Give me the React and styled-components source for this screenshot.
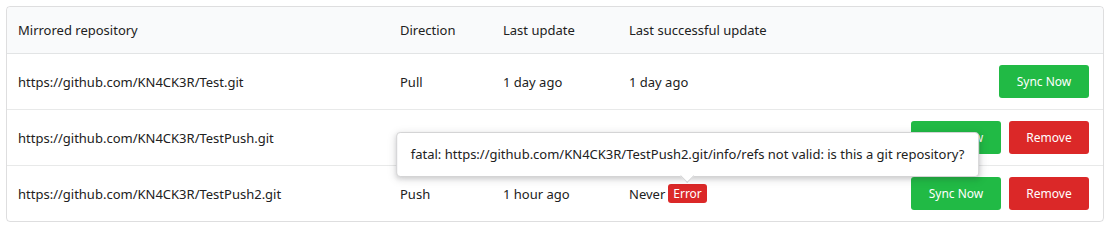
import React from "react";
import styled, { createGlobalStyle } from "styled-components";

const GlobalStyle = createGlobalStyle`
  html, body {
    margin: 0;
    padding: 0;
    background: #fff;
  }
  body {
    font-family: "Noto Sans", "Open Sans", "DejaVu Sans", sans-serif;
    font-size: 13px;
    color: #212121;
  }
`;

const mirrors = [
  {
    repo: "https://github.com/KN4CK3R/Test.git",
    direction: "Pull",
    updated: "1 day ago",
    success: "1 day ago",
    removable: false,
  },
  {
    repo: "https://github.com/KN4CK3R/TestPush.git",
    direction: "Push",
    updated: "1 hour ago",
    success: "1 hour ago",
    removable: true,
  },
  {
    repo: "https://github.com/KN4CK3R/TestPush2.git",
    direction: "Push",
    updated: "1 hour ago",
    success: "Never",
    removable: true,
    error:
      "fatal: https://github.com/KN4CK3R/TestPush2.git/info/refs not valid: is this a git repository?",
  },
];

export default function App() {
  return (
    <Page>
      <GlobalStyle />
      <Table>
        <thead>
          <tr>
            <Th width={360}>Mirrored repository</Th>
            <Th width={81}>Direction</Th>
            <Th width={104}>Last update</Th>
            <Th>Last successful update</Th>
            <Th width={200} />
          </tr>
        </thead>
        <tbody>
          {mirrors.map((m) => (
            <Row key={m.repo}>
              <Td>{m.repo}</Td>
              <Td>{m.direction}</Td>
              <Td>{m.updated}</Td>
              <Td>
                {m.success}
                {m.error && (
                  <Badge>
                    Error
                    <Tooltip>{m.error}</Tooltip>
                  </Badge>
                )}
              </Td>
              <ActionCell>
                <Actions>
                  <Button color="#21ba45" width={90}>
                    Sync Now
                  </Button>
                  {m.removable && (
                    <Button color="#db2828" width={80}>
                      Remove
                    </Button>
                  )}
                </Actions>
              </ActionCell>
            </Row>
          ))}
        </tbody>
      </Table>
    </Page>
  );
}

const Page = styled.div`
  padding: 6px 5px 6px 6px;
`;

const Table = styled.table`
  width: 100%;
  border-collapse: separate;
  border-spacing: 0;
  border: 1px solid rgba(34, 36, 38, 0.15);
  border-radius: 4px;
  table-layout: fixed;
`;

const Th = styled.th`
  width: ${(p) => (p.width ? `${p.width}px` : "auto")};
  height: 46px;
  padding: 0 11px;
  text-align: left;
  font-weight: 400;
  background: #f9fafb;
  border-bottom: 1px solid rgba(34, 36, 38, 0.1);
  &:first-child {
    border-top-left-radius: 4px;
  }
  &:last-child {
    border-top-right-radius: 4px;
  }
`;

const Row = styled.tr`
  & + & td {
    border-top: 1px solid rgba(34, 36, 38, 0.1);
  }
`;

const Td = styled.td`
  height: 55px;
  padding: 0 11px;
  white-space: nowrap;
  vertical-align: middle;
`;

const ActionCell = styled(Td)`
  padding-right: 14px;
`;

const Actions = styled.div`
  display: flex;
  justify-content: flex-end;
  gap: 8px;
`;

const Button = styled.button`
  width: ${(p) => p.width}px;
  height: 33px;
  border: none;
  border-radius: 3px;
  background: ${(p) => p.color};
  color: #fff;
  font-family: inherit;
  font-size: 12px;
  cursor: pointer;
`;

const Badge = styled.span`
  position: relative;
  display: inline-block;
  margin-left: 3px;
  padding: 1px 5px;
  border-radius: 3px;
  background: #db2828;
  color: #fff;
  font-size: 12px;
  line-height: 17px;
  vertical-align: 1px;
`;

const Tooltip = styled.div`
  position: absolute;
  left: 50%;
  bottom: calc(100% + 7px);
  transform: translateX(-50%);
  padding: 0 14px;
  height: 43px;
  display: flex;
  align-items: center;
  background: #fff;
  color: #212121;
  font-size: 13px;
  white-space: nowrap;
  border: 1px solid #d4d4d5;
  border-radius: 4px;
  box-shadow: 0 2px 4px 0 rgba(34, 36, 38, 0.12),
    0 2px 10px 0 rgba(34, 36, 38, 0.15);
  z-index: 2;

  &::after {
    content: "";
    position: absolute;
    left: 50%;
    bottom: -5px;
    width: 9px;
    height: 9px;
    background: #fff;
    border-right: 1px solid #d4d4d5;
    border-bottom: 1px solid #d4d4d5;
    transform: translateX(-50%) rotate(45deg);
  }
`;
